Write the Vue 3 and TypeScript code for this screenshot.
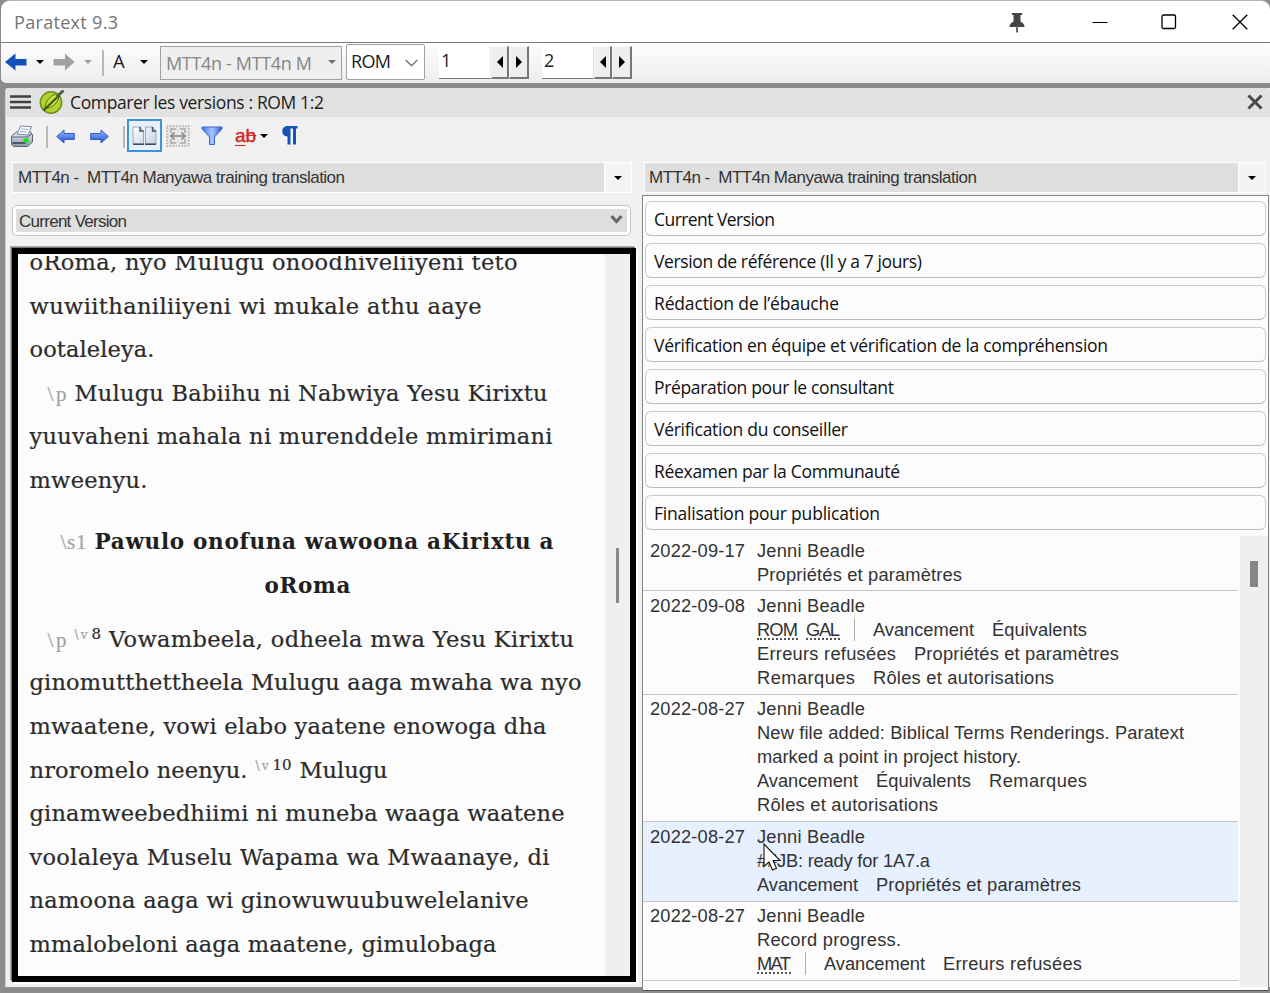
<script setup lang="ts">
import type { Directive } from 'vue'

// Tracks a run of text so that it fills the given width in pixels.
const vFit: Directive<HTMLElement, number> = {
  mounted(el, binding) {
    const natural = el.getBoundingClientRect().width
    const count = (el.textContent ?? '').length
    if (count > 1) {
      const step = (binding.value - natural) / (count - 1)
      el.style.letterSpacing = `${step.toFixed(3)}px`
      el.style.marginRight = `${(-step).toFixed(3)}px`
    }
  },
}

interface Part { t: string; w: number; kind: 'words' | 'mark' | 'vmark' | 'num' | 'bold' }
interface Line { parts: Part[]; cls?: string }

const plain = (t: string, w: number): Line => ({ parts: [{ t, w, kind: 'words' }] })

const lines: Line[] = [
  plain('oRoma, nyo Mulugu onoodhiveliiyeni teto', 488),
  plain('wuwiithaniliiyeni wi mukale athu aaye', 452),
  plain('ootaleleya.', 125),
  { cls: 'indent', parts: [{ t: '\\p', w: 19, kind: 'mark' }, { t: 'Mulugu Babiihu ni Nabwiya Yesu Kirixtu', w: 473, kind: 'words' }] },
  plain('yuuvaheni mahala ni murenddele mmirimani', 523),
  plain('mweenyu.', 118),
  { cls: 'head', parts: [{ t: '\\s1', w: 26, kind: 'mark' }, { t: 'Pawulo onofuna wawoona aKirixtu a', w: 459, kind: 'bold' }] },
  { cls: 'head2', parts: [{ t: 'oRoma', w: 86, kind: 'bold' }] },
  { cls: 'indent', parts: [{ t: '\\p', w: 19, kind: 'mark' }, { t: '\\v', w: 13, kind: 'vmark' }, { t: '8', w: 9, kind: 'num' }, { t: 'Vowambeela, odheela mwa Yesu Kirixtu', w: 465, kind: 'words' }] },
  plain('ginomutthettheela Mulugu aaga mwaha wa nyo', 552),
  plain('mwaatene, vowi elabo yaatene enowoga dha', 517),
  { parts: [{ t: 'nroromelo neenyu.', w: 218, kind: 'words' }, { t: '\\v', w: 13, kind: 'vmark' }, { t: '10', w: 19, kind: 'num' }, { t: 'Mulugu', w: 88, kind: 'words' }] },
  plain('ginamweebedhiimi ni muneba waaga waatene', 535),
  plain('voolaleya Muselu Wapama wa Mwaanaye, di', 520),
  plain('namoona aaga wi ginowuwuubuwelelanive', 499),
  plain('mmalobeloni aaga maatene, gimulobaga', 467),
]

const stages: [string, number][] = [
  ['Current Version', 121],
  ['Version de référence (Il y a 7 jours)', 268],
  ['Rédaction de l’ébauche', 185],
  ['Vérification en équipe et vérification de la compréhension', 454],
  ['Préparation pour le consultant', 240],
  ['Vérification du conseiller', 194],
  ['Réexamen par la Communauté', 246],
  ['Finalisation pour publication', 226],
]

interface Run { t: string; w: number; book?: boolean }
interface Entry { date: string; rows: Run[][]; active?: boolean }
const who: Run[] = [{ t: 'Jenni Beadle', w: 108 }]
const av: Run = { t: 'Avancement', w: 101 }
const eq: Run = { t: 'Équivalents', w: 95 }
const pp: Run = { t: 'Propriétés et paramètres', w: 205 }
const rem: Run = { t: 'Remarques', w: 98 }
const roles: Run = { t: 'Rôles et autorisations', w: 181 }
const err: Run = { t: 'Erreurs refusées', w: 139 }

const entries: Entry[] = [
  { date: '2022-09-17', rows: [who, [pp]] },
  { date: '2022-09-08', rows: [who, [{ t: 'ROM', w: 41, book: true }, { t: 'GAL', w: 34, book: true }, av, eq], [err, pp], [rem, roles]] },
  { date: '2022-08-27', rows: [who, [{ t: 'New file added: Biblical Terms Renderings. Paratext', w: 427 }], [{ t: 'marked a point in project history.', w: 264 }], [av, eq, rem], [roles]] },
  { date: '2022-08-27', active: true, rows: [who, [{ t: '##JB: ready for 1A7.a', w: 173 }], [av, pp]] },
  { date: '2022-08-27', rows: [who, [{ t: 'Record progress.', w: 144 }], [{ t: 'MAT', w: 34, book: true }, av, err]] },
]
const endsBooks = (row: Run[], i: number) => !!row[i].book && !row[i + 1]?.book
</script>

<template>
  <div class="screen">
    <header class="titlebar">
      <span class="title" v-fit="104">Paratext 9.3</span>
      <span class="grow"></span>
      <svg class="pin" width="16" height="20" viewBox="0 0 16 20"><path d="M3 0h10v2h-1.5v6.5c2.5 1 4 3 4 5.500h-15c0-2.500 1.500-4.500 4-5.500v-6.500H3z" fill="#454545" /><path d="M8 13v6.500" stroke="#666" stroke-width="2" /></svg>
      <svg class="min" width="16" height="16" viewBox="0 0 16 16"><path d="M0.500 8.500h15" stroke="#000" /></svg>
      <svg class="max" width="16" height="16" viewBox="0 0 16 16"><rect x="1" y="1" width="13.500" height="13.500" rx="1.500" fill="none" stroke="#000" stroke-width="1.300" /></svg>
      <svg class="close" width="16" height="16" viewBox="0 0 16 16"><path d="M.7.7l14.600 14.600M15.300.7L.7 15.300" stroke="#000" stroke-width="1.300" /></svg>
    </header>

    <div class="mainbar">
      <svg class="back" width="22" height="18" viewBox="0 0 22 18"><path d="M0 9L10.500 0.500V6H21.500v6.500H10.500v5z" fill="#1252b4" /></svg>
      <i class="caret c1"></i>
      <svg class="fwd" width="22" height="18" viewBox="0 0 22 18"><path d="M21.500 9L12 .5V6H.5v6.500H12v5z" fill="#a0a0a0" /></svg>
      <i class="caret c2"></i>
      <i class="sep s1"></i>
      <span class="letter">A</span>
      <i class="caret c3"></i>
      <div class="project"><span v-fit="146">MTT4n - MTT4n M</span><i class="caret"></i></div>
      <div class="book"><span v-fit="40">ROM</span><svg width="13" height="8" viewBox="0 0 13 8"><path d="M.7 1l5.800 5.800L12.300 1" fill="none" stroke="#777" stroke-width="1.400" /></svg></div>
      <div class="num-in n1">1</div>
      <div class="spin"><svg width="6" height="12" viewBox="0 0 6 12"><path d="M6 0v12L0 6z" /></svg></div>
      <div class="spin wide"><svg width="6" height="12" viewBox="0 0 6 12"><path d="M0 0v12l6-6z" /></svg></div>
      <div class="num-in n2">2</div>
      <div class="spin"><svg width="6" height="12" viewBox="0 0 6 12"><path d="M6 0v12L0 6z" /></svg></div>
      <div class="spin wide"><svg width="6" height="12" viewBox="0 0 6 12"><path d="M0 0v12l6-6z" /></svg></div>
    </div>

    <main class="dock">
      <div class="pane-title">
        <svg class="burger" width="22" height="14" viewBox="0 0 22 14"><path d="M0 1.500h21M0 7h21M0 12.500h21" stroke="#404040" stroke-width="2.400" /></svg>
        <svg class="leaf" width="26" height="24" viewBox="0 0 26 24"><circle cx="12" cy="12.500" r="10.700" fill="#b4d22e" stroke="#6f8c1e" stroke-width="1.500" /><path d="M19 3.500C11 5 6.500 11 6 18.500c8-.5 13-5.500 14.500-13.500z" fill="#c3de3a" stroke="#53701b" stroke-width="1" /><path d="M4.500 20.500C10 15 15 10.500 20.500 5" fill="none" stroke="#38551c" stroke-width="1.900" /><path d="M18 6.500L24.500.5" stroke="#4a6138" stroke-width="3" /></svg>
        <span v-fit="254">Comparer les versions : ROM 1:2</span>
        <span class="grow"></span>
        <svg class="pane-close" width="16" height="16" viewBox="0 0 16 16"><path d="M1.500 1.500l13 13M14.500 1.500l-13 13" stroke="#484848" stroke-width="3" /></svg>
      </div>

      <div class="tools">
        <svg class="printer" width="24" height="24" viewBox="0 0 24 24">
          <defs><linearGradient id="pr" x2="0" y2="1"><stop stop-color="#e9eef5" /><stop offset="1" stop-color="#8694a8" /></linearGradient></defs>
          <path d="M1.500 12l5-4h14l2 3v7l-5 4.500h-14l-2-2z" fill="url(#pr)" stroke="#56657a" />
          <path d="M7 10l3.500-8 11 .7L18 11z" fill="#f8fbff" stroke="#7b8aa0" /><path d="M11 5l7 .4M10 7.500l7 .4" stroke="#9db2cf" />
          <path d="M2 13h15.500l4.500-3.500" fill="none" stroke="#5d6c82" stroke-width="1.200" /><path d="M2.500 19h13" stroke="#333f52" stroke-width="1.600" /><rect x="13.500" y="14.500" width="5" height="4" fill="#19e01c" />
        </svg>
        <i class="sep s2"></i>
        <svg class="pv" width="19" height="15" viewBox="0 0 19 15"><defs><linearGradient id="ar" x2="0" y2="1"><stop stop-color="#9dc0ff" /><stop offset="1" stop-color="#1c4bc9" /></linearGradient></defs><path d="M.7 7.500L8 1v3.500h10.300v6H8V14z" fill="url(#ar)" stroke="#2e5cc8" /></svg>
        <svg class="nx" width="19" height="15" viewBox="0 0 19 15"><path d="M18.300 7.500L11 1v3.500H.7v6H11V14z" fill="url(#ar)" stroke="#2e5cc8" /></svg>
        <i class="sep s3"></i>
        <div class="toggled"><svg width="25" height="20" viewBox="0 0 25 20"><defs><linearGradient id="pg" x2="1" y2="1"><stop stop-color="#fff" /><stop offset="1" stop-color="#c4d0e0" /></linearGradient></defs><path d="M1 1h7l3.500 4v13H1zM13.500 1h7l3.500 4v13H13.500z" fill="url(#pg)" stroke="#9aa8bb" /><path d="M8 1v4h3.500M20.500 1v4H24M1 18.300h11M13 18.300h11" fill="none" stroke="#3c4b62" stroke-width="1.400" /></svg></div>
        <svg class="fitw" width="24" height="22" viewBox="0 0 24 22"><rect x="1" y="1" width="22" height="20" fill="#e6e6e6" stroke="#aaa" stroke-width="1.500" stroke-dasharray="1.500 1.500" /><path d="M5 8V4h5M14 4h5v4M5 14v4h5M14 18h5v-4" fill="none" stroke="#b8b8b8" stroke-width="2" /><path d="M5 11h14M8.500 7.500L5 11l3.500 3.500M15.500 7.500L19 11l-3.500 3.500" fill="none" stroke="#858585" stroke-width="1.700" /></svg>
        <svg class="funnel" width="22" height="20" viewBox="0 0 22 20"><defs><linearGradient id="fu" x2="1"><stop stop-color="#3c71e8" /><stop offset=".5" stop-color="#a7c8ff" /><stop offset="1" stop-color="#285bd3" /></linearGradient></defs><path d="M1 1h20v2l-7.500 8v7.500h-5V11L1 3z" fill="url(#fu)" stroke="#3a68ca" /></svg>
        <span class="ab"><u>a</u><s>b</s></span>
        <i class="caret c4"></i>
        <svg class="pilcrow" width="16" height="19" viewBox="0 0 16 19"><path d="M15.500 0H6C2.500 0 .3 2 .3 5.300S2.500 10.500 5.500 10.500V18.500h3V2.500h2.500v16h3V2.500h1.500z" fill="#1454b5" /></svg>
      </div>

      <div class="columns">
        <section class="left">
          <div class="picker"><div class="pick-text"><span v-fit="327">MTT4n -&nbsp; MTT4n Manyawa training translation</span></div><div class="pick-btn"><i class="caret"></i></div></div>
          <div class="version"><div class="version-in"><span v-fit="108">Current Version</span><svg width="13" height="11" viewBox="0 0 13 11"><path d="M1.500 2l5 5.500 5-5.500" fill="none" stroke="#666" stroke-width="3" /></svg></div></div>
          <div class="viewer">
            <div class="scripture">
              <div v-for="(l, i) in lines" :key="i" class="line" :class="l.cls"><span v-for="(p, j) in l.parts" :key="j" class="part" :class="p.kind" v-fit="p.w">{{ p.t }}</span></div>
            </div>
            <div class="track"><i></i></div>
          </div>
        </section>

        <section class="right">
          <div class="picker"><div class="pick-text"><span v-fit="328">MTT4n -&nbsp; MTT4n Manyawa training translation</span></div><div class="pick-btn"><i class="caret"></i></div></div>
          <div class="list">
            <div class="stages">
              <div v-for="[s, w] in stages" :key="s" class="stage"><span v-fit="w">{{ s }}</span></div>
            </div>
            <div class="history">
              <div class="entries">
                <div v-for="(e, i) in entries" :key="i" class="entry" :class="{ active: e.active }">
                  <div class="date"><span v-fit="95">{{ e.date }}</span></div>
                  <div class="body">
                    <div v-for="(r, j) in e.rows" :key="j" class="row"><template v-for="(x, k) in r" :key="k"><span class="run" :class="{ bk: x.book }"><span v-fit="x.w">{{ x.t }}</span></span><i v-if="endsBooks(r, k)" class="bar"></i></template></div>
                  </div>
                </div>
                <svg class="pointer" width="19" height="28" viewBox="0 0 19 28"><path d="M1 1v22.500l5-4.500 3.500 8 4-1.700-3.500-7.800h7z" fill="#fff" stroke="#151515" stroke-width="1.100" /></svg>
              </div>
              <div class="track2"><i></i></div>
            </div>
          </div>
        </section>
      </div>
    </main>
  </div>
</template>

<style>
body { background: #8c8c8c; overflow: hidden; }
</style>

<style scoped>
* { box-sizing: border-box; }
.screen { width: 1270px; height: 993px; display: flex; flex-direction: column; background: #8c8c8c; font-family: "Open Sans", "Noto Sans", sans-serif; font-size: 17.5px; color: #1c1c1c; overflow: hidden; }
.screen span { white-space: nowrap; }
svg { display: block; flex: none; }
.grow { flex: 1; }
.titlebar { height: 43px; flex: none; margin-left: 1px; border-top: 1px solid #b4b4b4; border-bottom: 1px solid #7b7b7b; border-radius: 9px 9px 0 0; background: #fff; display: flex; align-items: center; padding: 0 22px 0 13px; }
.title { color: #757575; font-size: 18px; }
.pin { margin: 3px 67px 0 0; }
.min { margin-right: 53px; }
.max { margin-right: 55px; }
.mainbar { height: 40px; flex: none; margin-left: 1px; background: linear-gradient(#fdfdfd, #ededed); border-radius: 0 0 0 5px; display: flex; align-items: flex-start; padding: 0 0 0 4px; }
.caret { width: 0; height: 0; flex: none; border: 4px solid transparent; border-top: 4.500px solid #000; border-bottom: 0; }
.mainbar > .caret { margin-top: 17px; }
.back, .fwd { margin-top: 10px; }
.c1 { margin-left: 9px; }
.fwd { margin-left: 9px; }
.mainbar > .c2 { margin-left: 9px; border-top-color: #a0a0a0; }
.sep { width: 2px; background: #b8b8b8; flex: none; }
.s1 { height: 26px; margin: 7px 9px 0 10px; }
.letter { width: 14px; line-height: 26px; margin-top: 5px; font-size: 18.500px; }
.mainbar > .c3 { margin-left: 13px; margin-right: 12px; }
.project { width: 182px; height: 34px; margin-top: 3px; border: 1px solid #a2a2a2; background: #efefef; color: #858585; display: flex; align-items: center; justify-content: space-between; padding: 0 5px; font-size: 18px; }
.project .caret { border-top-color: #707070; margin-top: -2px; }
.book { width: 79px; height: 36px; margin: 1px 0 0 4px; border: 1px solid #a2a2a2; border-radius: 2px; background: #fff; display: flex; align-items: center; justify-content: space-between; padding: 0 6px 3px 4px; font-size: 18px; }
.book svg { margin-top: 5px; }
.num-in { height: 33px; margin-top: 3px; width: 52px; background: #fff; border-bottom: 1px solid #777; border-right: 1px solid #e4e4e4; line-height: 29px; padding-left: 2px; font-size: 18px; }
.n1 { margin-left: 14px; }
.n2 { margin-left: 13px; }
.spin { width: 18px; height: 33px; margin-top: 3px; border: 1px solid #f7f7f7; border-right: 2px solid #777; border-bottom: 2px solid #777; background: #eee; display: flex; align-items: center; justify-content: center; }
.spin.wide { width: 20px; }
.n1 + .spin, .n2 + .spin { margin-left: 0; }
.dock { flex: none; height: 899px; margin: 5px 0 0 5px; background: #f1f1f1; border-left: 1px solid #d0d0d0; border-top-left-radius: 3px; display: flex; flex-direction: column; }
.pane-title { height: 29px; flex: none; background: #e2e2e2; display: flex; align-items: center; padding: 0 7px 2px 4px; border-radius: 3px 3px 0 0; }
.leaf { margin: 1px 5px 0 7px; }
.tools { height: 43px; flex: none; display: flex; align-items: flex-start; padding-left: 4px; }
.printer { margin-top: 7px; }
.s2 { height: 22px; margin: 9px 0 0 12px; }
.pv { margin: 12px 0 0 8px; }
.nx { margin: 12px 0 0 15px; }
.s3 { height: 22px; margin: 9px 0 0 14px; }
.toggled { margin: 2px 0 0 2px; width: 35px; height: 33px; border: 2px solid #3b93de; background: #e8f1fa; display: flex; align-items: center; justify-content: center; }
.fitw { margin: 8px 0 0 4px; }
.funnel { margin: 9px 0 0 11px; }
.ab { font-family: "Liberation Sans", sans-serif; font-size: 19px; line-height: 24px; color: #d42525; margin: 7px 0 0 12px; -webkit-text-stroke: .4px #d42525; }
.ab u { text-underline-offset: 3px; }
.c4 { margin: 17px 0 0 4px; }
.pilcrow { margin: 9px 0 0 14px; }
.columns { flex: 1; min-height: 0; display: flex; align-items: flex-start; }
.left { width: 630px; flex: none; padding-left: 6px; }
.picker { width: 620px; height: 31px; margin-top: 2px; border: 1px solid #fff; display: flex; }
.pick-text { flex: 1; background: #dedede; padding-left: 5px; line-height: 29px; }
.pick-text, .version-in { font-family: "Liberation Sans", sans-serif; font-size: 17px; color: #333; }
.pick-btn { width: 27px; border-left: 1px solid #fff; background: #f4f4f4; display: flex; align-items: center; justify-content: center; }
.version { width: 619px; height: 31px; margin: 12px 0 0 0; border: 1px solid #c6c6c6; border-radius: 5px; background: #fff; padding: 3px; }
.version-in { height: 23px; background: #dedede; display: flex; align-items: center; justify-content: space-between; padding: 2px 4px 0 3px; }
.version-in svg { margin-top: -4px; }
.viewer { width: 624px; height: 734px; margin: 12px 0 0 0; border: 6px solid #000; box-shadow: -1px -1px 0 #777, -2px -2px 0 #aaa, 2px 2px 0 #fff; background: #fcfcfc; display: flex; }
.scripture { flex: 1; min-width: 0; height: 719px; margin-top: 2px; overflow: hidden; padding-left: 11.500px; font-family: "DejaVu Serif", serif; font-size: 22.500px; color: #2b2b2b; -webkit-text-stroke: .2px currentColor; }
.line { height: 43.560px; line-height: 43.560px; white-space: nowrap; }
.line:first-child { margin-top: -15px; }
.part { display: inline-block; vertical-align: baseline; }
.part + .part { margin-left: 8px; }
.indent { padding-left: 18px; }
.head { margin-top: 18px; padding-left: 31px; }
.head2 { padding-left: 235px; margin-bottom: 10.500px; }
.bold { font-weight: bold; font-size: 21.500px; color: #202020; -webkit-text-stroke: 0; }
.mark { font-family: "Liberation Serif", serif; font-size: 21px; color: #a2a2a2; line-height: 20px; }
.vmark { font-size: 12px; color: #a2a2a2; vertical-align: 8px; line-height: 14px; }
.num { font-size: 15px; vertical-align: 8px; line-height: 14px; }
.part + .num { margin-left: 4px; }
.track { width: 25px; background: #efefef; display: flex; justify-content: center; padding-top: 294px; }
.track i { width: 3px; height: 55px; background: #888; }
.right { flex: 1; min-width: 0; height: 831px; }
.right .picker { margin-left: 8px; width: 622px; }
.right .pick-text { padding-left: 4px; }
.list { margin: 2px 1px 0 6px; height: 796px; border: 1px solid #858585; border-bottom-color: #555; background: #fcfcfc; display: flex; flex-direction: column; overflow: hidden; }
.stages { display: flex; flex-direction: column; gap: 7px; padding: 5px 2px 0 2px; }
.stage { height: 35px; border: 1px solid #cbcbcb; border-bottom: 1.500px solid #bdbdbd; border-radius: 6px; padding-left: 8px; line-height: 34px; color: #111; }
.history { display: flex; margin-top: 6px; height: 451px; flex: none; font-family: "Liberation Sans", sans-serif; font-size: 18.300px; color: #333; }
.entries { flex: 1; position: relative; margin-right: 2px; }
.entry { display: flex; padding: 2.700px 0 4.200px 7px; border-bottom: 1px solid #c6c6c6; }
.entry.active { background: #e6f0ff; }
.entry:first-child { padding-bottom: 3.800px; }
.date { width: 107px; line-height: 24px; flex: none; }
.row { height: 23.920px; line-height: 24px; display: flex; gap: 18px; }
.run.bk { height: 22px; border-bottom: 2px dotted #555; margin-right: -10px; line-height: 24px; }
.bar { width: 1px; height: 23px; background: #b0b0b0; margin-left: 6px; }
.pointer { position: absolute; left: 120px; top: 307px; }
.track2 { width: 28px; background: #efefef; display: flex; justify-content: center; padding: 25px 0 0 0; }
.track2 i { width: 8px; height: 26px; background: #858585; }
</style>
